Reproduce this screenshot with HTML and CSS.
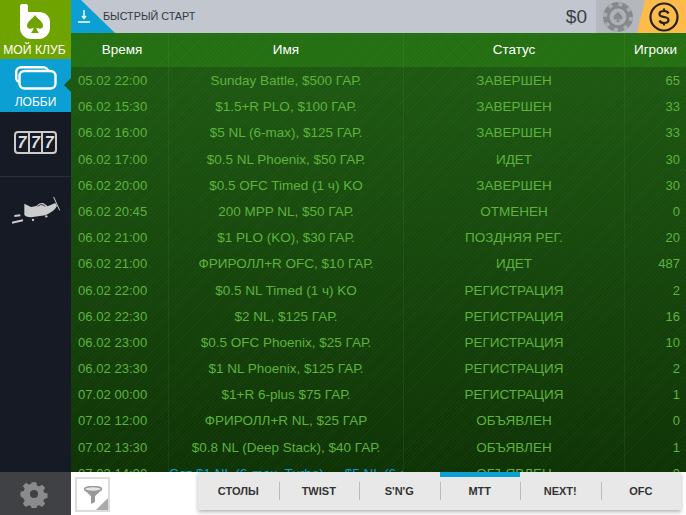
FILE: index.html
```html
<!DOCTYPE html>
<html lang="ru">
<head>
    <meta charset="UTF-8">
    <title>Лобби</title>
    <link rel="stylesheet" href="styles.css">
</head>
<body>
    <div class="app">
        <div class="sidebar">
            <div class="side-item club">
                <svg class="club-logo" width="30" height="35" viewBox="0 0 30 35">
                    <path fill="#fff" d="M2 0h4a2 2 0 0 1 2 2v6h11c6 0 11 4 11 10v6c0 6-5 11-11 11h-8C5 35 0 30 0 24V2a2 2 0 0 1 2-2z"/>
                    <path fill="#6fa300" d="M15 11c2.500 4 8 6 8 11 0 3-4.500 3.500-6.500 1.500 0 2 .8 3.500 2.500 5.500h-8c1.700-2 2.500-3.500 2.500-5.500-2 2-6.500 1.500-6.500-1.500 0-5 5.500-7 8-11z"/>
                </svg>
                <span>МОЙ КЛУБ</span>
            </div>
            <div class="side-item lobby">
                <svg width="42" height="24" viewBox="0 0 42 24" fill="none" stroke="#fff" stroke-width="2.400">
                    <rect x="1.200" y="1.200" width="32" height="15.500" rx="5"/>
                    <rect x="4.500" y="5" width="36" height="17.500" rx="5" fill="#0b9fd3"/>
                </svg>
                <span>ЛОББИ</span>
            </div>
            <div class="side-item slots">
                <div class="slot-box"><b>7</b><b>7</b><b>7</b></div>
            </div>
            <div class="side-item plane">
                <svg width="58" height="38" viewBox="0 0 174 114">
                    <path fill="#ccc" d="M52 35L72 45 88 42Q98 30 110 34L122 43 145 33 150 42Q142 58 115 70L72 76Q55 74 52 68Z"/>
                    <path fill="none" stroke="#161a24" stroke-width="2.500" d="M92 43Q100 35 110 39L114 44"/>
                    <circle cx="78" cy="84" r="3.500" fill="#ccc"/>
                    <circle cx="118" cy="73" r="3.500" fill="#ccc"/>
                    <path fill="none" stroke="#ccc" stroke-width="3" d="M140 15L158 55"/>
                    <path fill="none" stroke="#ccc" stroke-width="6" d="M22 72L40 70M15 92L48 85"/>
                </svg>
            </div>
            <div class="side-item settings">
                <svg width="28" height="28" viewBox="0 0 28 28">
                    <path fill="#8b8b8b" fill-rule="evenodd" d="M11.500 1h5l.8 3.600 2.400 1 3.200-2 3.500 3.500-2 3.200 1 2.400 3.600.8v5l-3.600.8-1 2.400 2 3.200-3.500 3.500-3.200-2-2.400 1-.8 3.600h-5l-.8-3.600-2.400-1-3.200 2-3.500-3.500 2-3.200-1-2.400L-1 16.500v-5l3.600-.8 1-2.400-2-3.200L5.100 1.600l3.200 2 2.400-1zM14 9.500a4.500 4.500 0 1 0 0 9 4.500 4.500 0 0 0 0-9z" transform="translate(1.400 1.400) scale(.9)"/>
                </svg>
            </div>
        </div>
        <div class="main">
            <div class="topbar">
                <div class="quick-corner">
                    <svg width="12" height="13" viewBox="0 0 12 13" fill="none" stroke="#fff" stroke-width="1.400">
                        <path d="M6 0v8M4 6l2 2.500L8 6M0 12h12"/>
                    </svg>
                </div>
                <span class="quick-text">БЫСТРЫЙ СТАРТ</span>
                <span class="balance">$0</span>
                <div class="chip-btn">
                    <svg width="30" height="30" viewBox="0 0 30 30">
                        <circle cx="15" cy="15" r="15" fill="#878b90"/>
                        <circle cx="15" cy="15" r="13" fill="none" stroke="#a9acb0" stroke-width="4" stroke-dasharray="4 6.210"/>
                        <circle cx="15" cy="15" r="9.500" fill="#aeb1b5" stroke="#84888d" stroke-width="2"/>
                        <path fill="#878b90" d="M15 9.500c1.500 2.500 4.500 3.500 4.500 6.300 0 1.900-2.500 2.300-3.700 1.100 0 1.300.5 2.100 1.200 3h-4c.7-.9 1.200-1.700 1.200-3-1.200 1.200-3.700.8-3.700-1.100 0-2.800 3-3.800 4.500-6.300z"/>
                    </svg>
                </div>
                <div class="cash-btn">
                    <svg width="30" height="30" viewBox="0 0 30 30" fill="none" stroke="#222" stroke-width="2.200">
                        <circle cx="15" cy="15" r="13.500"/>
                        <path d="M19.500 11.500c-.6-1.500-2.500-2.500-4.500-2.500-2.700 0-4.500 1.200-4.500 3s1.800 2.600 4.500 3 4.500 1.200 4.500 3-1.800 3-4.500 3c-2 0-3.900-1-4.500-2.500M15 6.500V9M15 21v2.500"/>
                    </svg>
                </div>
            </div>
            <div class="table-wrap">
                <div class="row head">
                    <div class="cell">Время</div>
                    <div class="cell">Имя</div>
                    <div class="cell">Статус</div>
                    <div class="cell">Игроки</div>
                </div>
                <div class="rows">
                    <div class="row"><div class="cell">05.02 22:00</div><div class="cell">Sunday Battle, $500 ГАР.</div><div class="cell">ЗАВЕРШЕН</div><div class="cell">65</div></div>
                    <div class="row"><div class="cell">06.02 15:30</div><div class="cell">$1.5+R PLO, $100 ГАР.</div><div class="cell">ЗАВЕРШЕН</div><div class="cell">33</div></div>
                    <div class="row"><div class="cell">06.02 16:00</div><div class="cell">$5 NL (6-max), $125 ГАР.</div><div class="cell">ЗАВЕРШЕН</div><div class="cell">33</div></div>
                    <div class="row"><div class="cell">06.02 17:00</div><div class="cell">$0.5 NL Phoenix, $50 ГАР.</div><div class="cell">ИДЕТ</div><div class="cell">30</div></div>
                    <div class="row"><div class="cell">06.02 20:00</div><div class="cell">$0.5 OFC Timed (1 ч) KO</div><div class="cell">ЗАВЕРШЕН</div><div class="cell">30</div></div>
                    <div class="row"><div class="cell">06.02 20:45</div><div class="cell">200 MPP NL, $50 ГАР.</div><div class="cell">ОТМЕНЕН</div><div class="cell">0</div></div>
                    <div class="row"><div class="cell">06.02 21:00</div><div class="cell">$1 PLO (KO), $30 ГАР.</div><div class="cell">ПОЗДНЯЯ РЕГ.</div><div class="cell">20</div></div>
                    <div class="row"><div class="cell">06.02 21:00</div><div class="cell">ФРИРОЛЛ+R OFC, $10 ГАР.</div><div class="cell">ИДЕТ</div><div class="cell">487</div></div>
                    <div class="row"><div class="cell">06.02 22:00</div><div class="cell">$0.5 NL Timed (1 ч) KO</div><div class="cell">РЕГИСТРАЦИЯ</div><div class="cell">2</div></div>
                    <div class="row"><div class="cell">06.02 22:30</div><div class="cell">$2 NL, $125 ГАР.</div><div class="cell">РЕГИСТРАЦИЯ</div><div class="cell">16</div></div>
                    <div class="row"><div class="cell">06.02 23:00</div><div class="cell">$0.5 OFC Phoenix, $25 ГАР.</div><div class="cell">РЕГИСТРАЦИЯ</div><div class="cell">10</div></div>
                    <div class="row"><div class="cell">06.02 23:30</div><div class="cell">$1 NL Phoenix, $125 ГАР.</div><div class="cell">РЕГИСТРАЦИЯ</div><div class="cell">2</div></div>
                    <div class="row"><div class="cell">07.02 00:00</div><div class="cell">$1+R 6-plus $75 ГАР.</div><div class="cell">РЕГИСТРАЦИЯ</div><div class="cell">1</div></div>
                    <div class="row"><div class="cell">07.02 12:00</div><div class="cell">ФРИРОЛЛ+R NL, $25 ГАР</div><div class="cell">ОБЪЯВЛЕН</div><div class="cell">0</div></div>
                    <div class="row"><div class="cell">07.02 13:30</div><div class="cell">$0.8 NL (Deep Stack), $40 ГАР.</div><div class="cell">ОБЪЯВЛЕН</div><div class="cell">1</div></div>
                    <div class="row"><div class="cell">07.02 14:00</div><div class="cell sat">Сат $1 NL (6-max, Turbo) → $5 NL (6-max)</div><div class="cell">ОБЪЯВЛЕН</div><div class="cell">0</div></div>
                </div>
            </div>
            <div class="bottombar">
                <div class="filter-btn">
                    <svg width="20" height="18" viewBox="0 0 20 18">
                        <ellipse cx="10" cy="3" rx="8.500" ry="2.500" fill="#e4e4e4" stroke="#999" stroke-width="1.500"/>
                        <path fill="#999" d="M2 4c2 3 5 4.500 6 6.500V18l4-2v-5.500c1-2 4-3.500 6-6.500-3 2-13 2-16 0z"/>
                    </svg>
                    <i class="corner"></i>
                </div>
                <div class="tabs">
                    <div class="tab">СТОЛЫ</div>
                    <div class="tab">TWIST</div>
                    <div class="tab">S'N'G</div>
                    <div class="tab active">MTT</div>
                    <div class="tab">NEXT!</div>
                    <div class="tab">OFC</div>
                </div>
            </div>
        </div>
    </div>
</body>
</html>
```

FILE: styles.css
```css
html, body {
    margin: 0;
    height: 100%;
    overflow: hidden;
}
body {
    font-family: "Liberation Sans", Arial, sans-serif;
    background-color: #fff;
}
.app {
    display: flex;
    width: 686px;
    height: 515px;
}

/* left menu */
.sidebar {
    width: 71px;
    display: flex;
    flex-direction: column;
    background-color: #161a24;
    flex-shrink: 0;
}
.side-item {
    display: flex;
    flex-direction: column;
    align-items: center;
    position: relative;
    color: white;
}
.club {
    height: 59px;
    background-color: #6fa300;
    padding: 4px 2px 0 0;
    box-sizing: border-box;
    font-size: 12.2px;
}
.club-logo {
    margin-bottom: 4px;
}
.club span {
    line-height: 14px;
}
.lobby {
    height: 53px;
    background-color: #0b9fd3;
    padding-top: 7px;
    box-sizing: border-box;
    font-size: 12px;
    gap: 5px;
}
.lobby::after {
    content: "";
    position: absolute;
    right: 0;
    top: 19px;
    border-style: solid;
    border-width: 7px 7px 7px 0;
    border-color: transparent #1b5a12 transparent transparent;
}
.slots {
    height: 65px;
    justify-content: center;
    border-bottom: 1px solid #2b2f38;
    box-sizing: border-box;
    padding-bottom: 4px;
}
.slot-box {
    display: flex;
    border: 2px solid #ccc;
    border-radius: 4px;
    width: 43px;
    height: 23px;
    box-sizing: border-box;
}
.slot-box b {
    flex: 1;
    color: #ddd;
    font-size: 16px;
    line-height: 19px;
    text-align: center;
    font-style: italic;
}
.slot-box b + b {
    border-left: 2px solid #ccc;
}
.plane {
    flex: 1;
    padding-top: 15px;
}
.settings {
    height: 43px;
    background-color: #3f4144;
    justify-content: center;
    flex-shrink: 0;
    padding-right: 3px;
}

/* top bar */
.main {
    flex: 1;
    display: flex;
    flex-direction: column;
    min-width: 0;
}
.topbar {
    height: 33px;
    display: flex;
    align-items: center;
    background-color: #c2c7cf;
    flex-shrink: 0;
}
.quick-corner {
    width: 44px;
    height: 33px;
    margin-right: -12px;
    background-color: #0b9fd3;
    clip-path: polygon(0 0, 10px 0, 44px 33px, 0 33px);
    padding: 10px 0 0 7px;
    box-sizing: border-box;
    line-height: 0;
}
.quick-text {
    font-size: 10.8px;
    color: #33373d;
    flex: 1;
    margin-top: -1px;
}
.balance {
    font-size: 19px;
    color: #3a3e44;
    margin-right: 9px;
}
.chip-btn {
    width: 53px;
    height: 33px;
    background-color: #b4b8bd;
    display: flex;
    align-items: center;
    padding-left: 7px;
    box-sizing: border-box;
}
.cash-btn {
    width: 49px;
    height: 33px;
    margin-left: -12px;
    background-color: #fdbb4c;
    clip-path: polygon(8px 0, 100% 0, 100% 100%, 0 100%);
    display: flex;
    align-items: center;
    justify-content: flex-end;
    padding-right: 7px;
    box-sizing: border-box;
}

/* tournaments table */
.table-wrap {
    flex: 1;
    min-height: 0;
    overflow: hidden;
    background-color: #1b5a12;
    background-image: repeating-linear-gradient(135deg, rgba(255,255,255,.025) 0 1px, transparent 1px 3px), linear-gradient(#1f5c13, #0e3305);
}
.row {
    display: grid;
    grid-template-columns: 98px 235px 221px 61px;
    height: 26.2px;
    line-height: 27px;
    font-size: 13.5px;
    color: #5fb23d;
    text-align: center;
}
.cell {
    white-space: nowrap;
    overflow: hidden;
    border-right: 1px solid rgba(255,255,255,.05);
}
.cell:last-child {
    border-right: none;
    text-align: right;
    padding-right: 6px;
    font-size: 13px;
}
.row .cell:first-child {
    text-align: left;
    padding-left: 7px;
    font-size: 13.1px;
}
.row.head {
    height: 34px;
    line-height: 34px;
    color: white;
    background-color: #246f11;
    background-image: repeating-linear-gradient(135deg, rgba(255,255,255,.025) 0 1px, transparent 1px 3px);
}
.row.head .cell {
    font-size: 13.5px;
}
.row.head .cell:first-child {
    text-align: center;
    padding-left: 5px;
    font-size: 13.5px;
}
.row.head .cell:last-child {
    text-align: center;
    padding-right: 0;
}
.cell.sat {
    color: #0b9fd3;
}

/* bottom bar */
.bottombar {
    height: 43px;
    display: flex;
    background-color: #fff;
    flex-shrink: 0;
}
.filter-btn {
    width: 35px;
    height: 35px;
    margin: 5px 0 0 4px;
    border: 2px solid #ddd;
    box-sizing: border-box;
    display: flex;
    justify-content: center;
    align-items: center;
    position: relative;
}
.corner {
    position: absolute;
    right: 0;
    bottom: 0;
    border-style: solid;
    border-width: 0 0 12px 12px;
    border-color: transparent transparent #aaa transparent;
}
.tabs {
    margin: 0 5px 0 auto;
    width: 483px;
    height: 38px;
    display: flex;
    background-color: #e8e8e8;
    box-shadow: 0 2px 4px rgba(0,0,0,.3);
}
.tab {
    flex: 1;
    text-align: center;
    font-size: 11px;
    font-weight: bold;
    color: #333;
    line-height: 38px;
    position: relative;
}
.tab + .tab::before {
    content: "";
    position: absolute;
    left: 0;
    top: 10px;
    height: 18px;
    width: 1px;
    background-color: #bbb;
}
.tab.active::after {
    content: "";
    position: absolute;
    left: 0;
    right: 0;
    top: 0;
    height: 5px;
    background-color: #0b9fd3;
}
```
